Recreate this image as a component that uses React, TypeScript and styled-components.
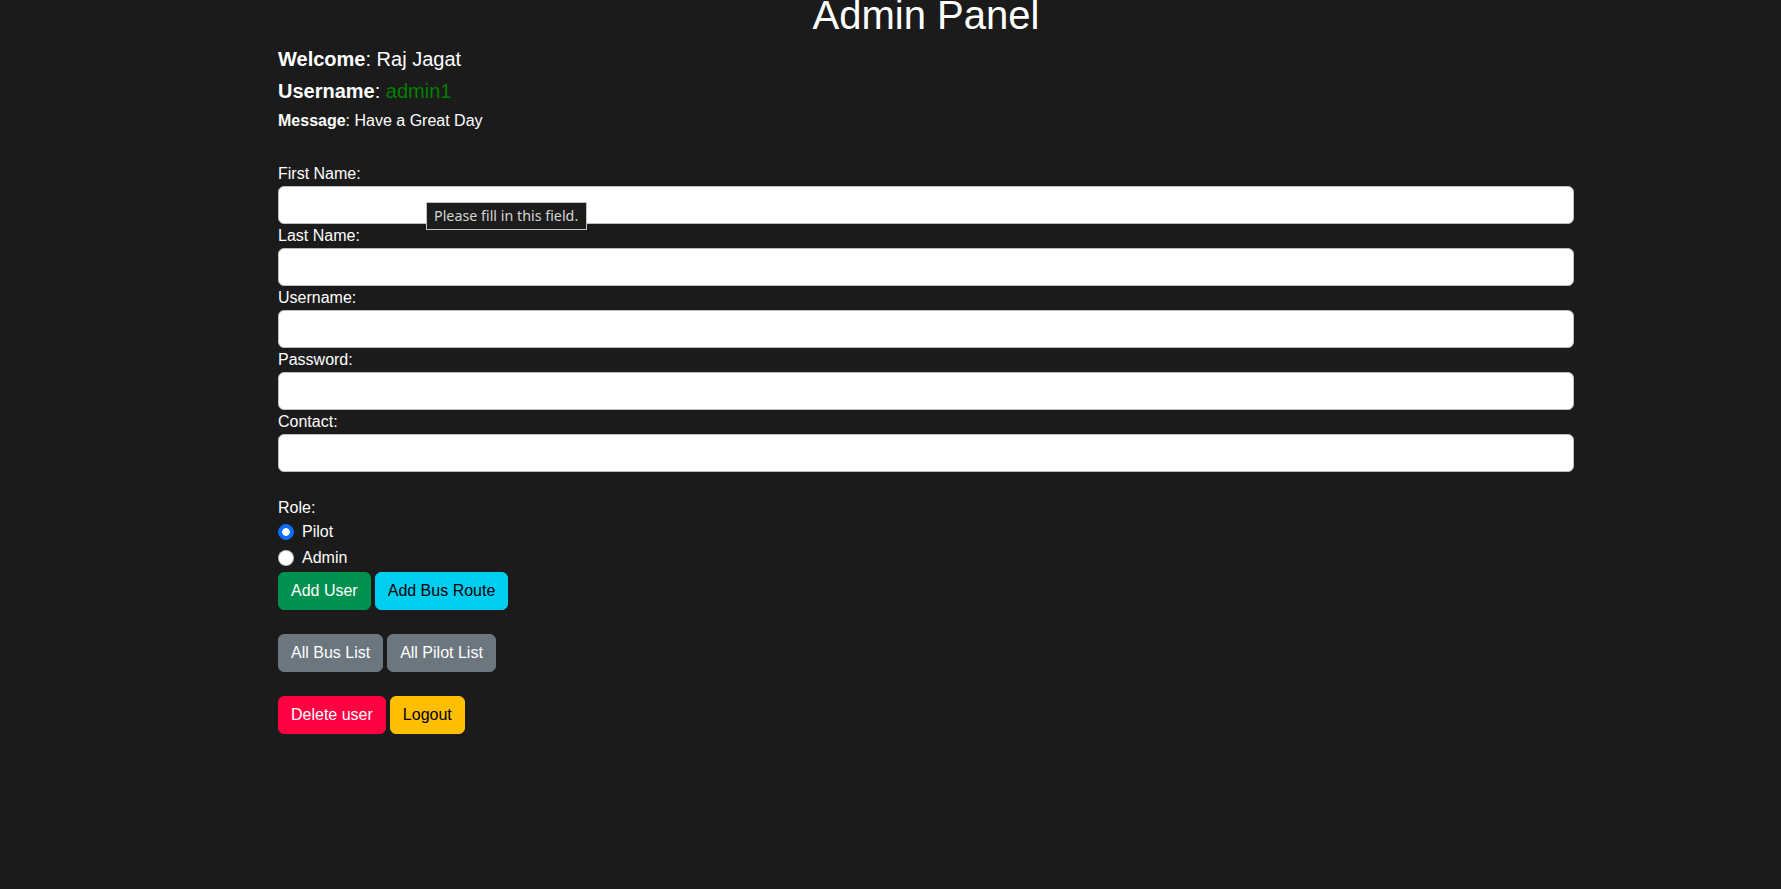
import React, { useState } from "react";
import styled, { createGlobalStyle } from "styled-components";

const GlobalStyle = createGlobalStyle`
	body {
		margin: 0;
		background-color: #1b1b1b;
		color: #ffffff;
		font-family: "Liberation Sans", Arial, sans-serif;
		font-size: 16px;
		line-height: 1.5;
		overflow: hidden;
	}
	* {
		box-sizing: border-box;
	}
`;

const Page = styled.div`
	width: 1296px;
	margin-left: 278px;
	min-height: 889px;
`;

const Title = styled.h1`
	font-size: 40px;
	font-weight: 400;
	line-height: 1.2;
	text-align: center;
	margin: -9px 0 8px 0;
`;

const Info = styled.div<{ $size: number }>`
	font-size: ${(p) => p.$size}px;
	font-weight: 500;
	line-height: 1.2;
	margin-bottom: 8px;
	b {
		font-weight: 700;
	}
`;

const Green = styled.span`
	color: #008000;
`;

const Form = styled.form`
	padding-top: 24px;
	display: flex;
	flex-direction: column;
`;

const Label = styled.label`
	display: block;
	line-height: 24px;
`;

const FieldBox = styled.div`
	position: relative;
`;

const Input = styled.input`
	display: block;
	width: 100%;
	height: 38px;
	padding: 6px 12px;
	font-size: 16px;
	font-family: inherit;
	background-color: #ffffff;
	border: 1px solid #b9bec4;
	border-radius: 6px;
	outline: none;
`;

const Tooltip = styled.div`
	position: absolute;
	left: 148px;
	top: 16px;
	height: 28px;
	padding: 0 8px 0 7px;
	display: flex;
	align-items: center;
	background-color: #1c1c1c;
	border: 1px solid #c4c4c4;
	color: #d4d4d4;
	font-family: "Noto Sans", "DejaVu Sans", sans-serif;
	font-size: 14.3px;
	white-space: nowrap;
	z-index: 2;
`;

const RoleBox = styled.div`
	margin-top: 24px;
`;

const Check = styled.label`
	display: flex;
	align-items: center;
	gap: 8px;
	min-height: 24px;
	margin-bottom: 2px;
	line-height: 24px;
`;

const Radio = styled.input`
	appearance: none;
	width: 16px;
	height: 16px;
	margin: 0;
	border-radius: 50%;
	background-color: #ffffff;
	border: 1px solid rgba(0, 0, 0, 0.25);
	&:checked {
		background-color: #0d6efd;
		border-color: #0d6efd;
		background-image: radial-gradient(circle, #ffffff 0 3.6px, transparent 4px);
	}
`;

const BtnRow = styled.div<{ $gap?: number }>`
	display: flex;
	gap: 4px;
	margin-top: ${(p) => p.$gap ?? 0}px;
`;

const COLORS: Record<string, [string, string]> = {
	success: ["#009150", "#ffffff"],
	info: ["#00cef1", "#000000"],
	secondary: ["#6c767e", "#ffffff"],
	danger: ["#ff0042", "#ffffff"],
	warning: ["#ffbe00", "#000000"],
};

const Btn = styled.button<{ $kind: string }>`
	height: 38px;
	padding: 6px 12px;
	font-size: 16px;
	line-height: 24px;
	font-family: inherit;
	background-color: ${(p) => COLORS[p.$kind][0]};
	color: ${(p) => COLORS[p.$kind][1]};
	border: 1px solid ${(p) => COLORS[p.$kind][0]};
	border-radius: 6px;
	cursor: pointer;
`;

const fields = ["First Name", "Last Name", "Username", "Password", "Contact"];

export default function App() {
	const [role, setRole] = useState<string>("pilot");

	return (
		<>
			<GlobalStyle />
			<Page>
				<Title>Admin Panel</Title>
				<Info $size={20}>
					<b>Welcome</b>: Raj Jagat
				</Info>
				<Info $size={20}>
					<b>Username</b>: <Green>admin1</Green>
				</Info>
				<Info $size={16}>
					<b>Message</b>: Have a Great Day
				</Info>
				<Form onSubmit={(e) => e.preventDefault()}>
					{fields.map((f, i) => (
						<div key={f}>
							<Label>{f}:</Label>
							<FieldBox>
								<Input type={f === "Password" ? "password" : "text"} />
								{i === 0 && <Tooltip>Please fill in this field.</Tooltip>}
							</FieldBox>
						</div>
					))}
					<RoleBox>
						<Label>Role:</Label>
						<Check>
							<Radio
								type="radio"
								name="role"
								checked={role === "pilot"}
								onChange={() => setRole("pilot")}
							/>
							Pilot
						</Check>
						<Check>
							<Radio
								type="radio"
								name="role"
								checked={role === "admin"}
								onChange={() => setRole("admin")}
							/>
							Admin
						</Check>
					</RoleBox>
					<BtnRow>
						<Btn $kind="success">Add User</Btn>
						<Btn $kind="info" type="button">Add Bus Route</Btn>
					</BtnRow>
				</Form>
				<BtnRow $gap={24}>
					<Btn $kind="secondary">All Bus List</Btn>
					<Btn $kind="secondary">All Pilot List</Btn>
				</BtnRow>
				<BtnRow $gap={24}>
					<Btn $kind="danger">Delete user</Btn>
					<Btn $kind="warning">Logout</Btn>
				</BtnRow>
			</Page>
		</>
	);
}
